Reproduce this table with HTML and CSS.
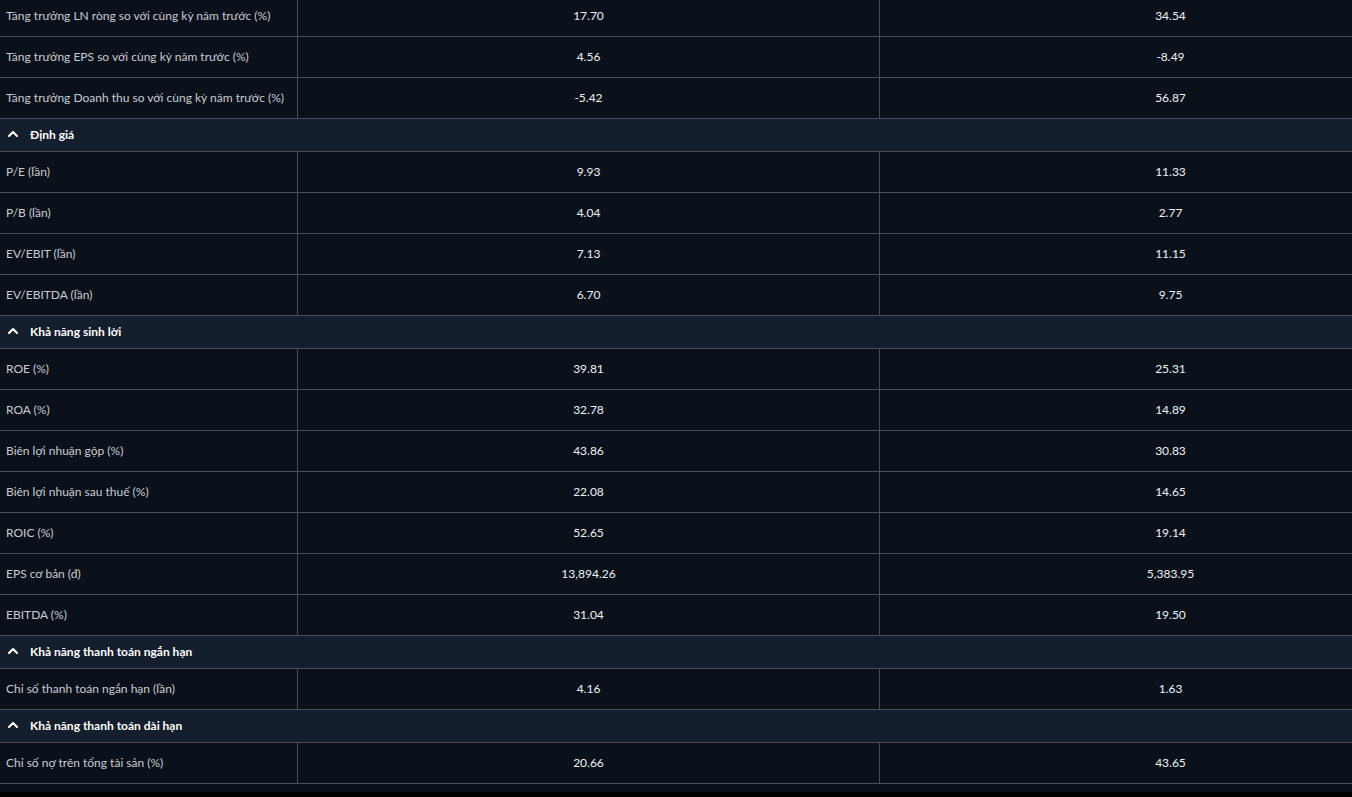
FILE: index.html
```html
<!DOCTYPE html>
<html lang="vi">
<head>
<meta charset="utf-8">
<title>Chỉ số tài chính</title>
<link rel="stylesheet" href="styles.css">
</head>
<body>
<div class="viewport">
  <div class="table">
    <div class="row"><div class="cell label">Tăng trưởng LN ròng so với cùng kỳ năm trước (%)</div><div class="cell val">17.70</div><div class="cell val last">34.54</div></div>
    <div class="row"><div class="cell label">Tăng trưởng EPS so với cùng kỳ năm trước (%)</div><div class="cell val">4.56</div><div class="cell val last">-8.49</div></div>
    <div class="row"><div class="cell label">Tăng trưởng Doanh thu so với cùng kỳ năm trước (%)</div><div class="cell val">-5.42</div><div class="cell val last">56.87</div></div>

    <div class="section"><svg class="chev" width="10" height="6" viewBox="0 0 10 6"><path d="M1 5 L5 1 L9 5" fill="none" stroke="#fff" stroke-width="2" stroke-linecap="round" stroke-linejoin="round"/></svg><span>Định giá</span></div>
    <div class="row"><div class="cell label">P/E (lần)</div><div class="cell val">9.93</div><div class="cell val last">11.33</div></div>
    <div class="row"><div class="cell label">P/B (lần)</div><div class="cell val">4.04</div><div class="cell val last">2.77</div></div>
    <div class="row"><div class="cell label">EV/EBIT (lần)</div><div class="cell val">7.13</div><div class="cell val last">11.15</div></div>
    <div class="row"><div class="cell label">EV/EBITDA (lần)</div><div class="cell val">6.70</div><div class="cell val last">9.75</div></div>

    <div class="section"><svg class="chev" width="10" height="6" viewBox="0 0 10 6"><path d="M1 5 L5 1 L9 5" fill="none" stroke="#fff" stroke-width="2" stroke-linecap="round" stroke-linejoin="round"/></svg><span>Khả năng sinh lời</span></div>
    <div class="row"><div class="cell label">ROE (%)</div><div class="cell val">39.81</div><div class="cell val last">25.31</div></div>
    <div class="row"><div class="cell label">ROA (%)</div><div class="cell val">32.78</div><div class="cell val last">14.89</div></div>
    <div class="row"><div class="cell label">Biên lợi nhuận gộp (%)</div><div class="cell val">43.86</div><div class="cell val last">30.83</div></div>
    <div class="row"><div class="cell label">Biên lợi nhuận sau thuế (%)</div><div class="cell val">22.08</div><div class="cell val last">14.65</div></div>
    <div class="row"><div class="cell label">ROIC (%)</div><div class="cell val">52.65</div><div class="cell val last">19.14</div></div>
    <div class="row"><div class="cell label">EPS cơ bản (đ)</div><div class="cell val">13,894.26</div><div class="cell val last">5,383.95</div></div>
    <div class="row"><div class="cell label">EBITDA (%)</div><div class="cell val">31.04</div><div class="cell val last">19.50</div></div>

    <div class="section"><svg class="chev" width="10" height="6" viewBox="0 0 10 6"><path d="M1 5 L5 1 L9 5" fill="none" stroke="#fff" stroke-width="2" stroke-linecap="round" stroke-linejoin="round"/></svg><span>Khả năng thanh toán ngắn hạn</span></div>
    <div class="row"><div class="cell label">Chỉ số thanh toán ngắn hạn (lần)</div><div class="cell val">4.16</div><div class="cell val last">1.63</div></div>

    <div class="section"><svg class="chev" width="10" height="6" viewBox="0 0 10 6"><path d="M1 5 L5 1 L9 5" fill="none" stroke="#fff" stroke-width="2" stroke-linecap="round" stroke-linejoin="round"/></svg><span>Khả năng thanh toán dài hạn</span></div>
    <div class="row"><div class="cell label">Chỉ số nợ trên tổng tài sản (%)</div><div class="cell val">20.66</div><div class="cell val last">43.65</div></div>
  </div>
</div>
</body>
</html>
```

FILE: styles.css
```css
html, body {
  margin: 0;
  padding: 0;
  background: #000;
  height: 100%;
}
body {
  font-family: Lato, "Noto Sans", sans-serif;
  font-size: 12px;
  overflow: hidden;
}
.viewport {
  width: 1352px;
  overflow: hidden;
  background: #0b111b;
  padding-bottom: 8px;
}
.table {
  width: 1461px;
  margin-top: -4px;
}
.row {
  display: grid;
  grid-template-columns: 298px 582px 581px;
  border-bottom: 1px solid #4a4f57;
}
.cell {
  box-sizing: border-box;
  height: 40px;
  padding-bottom: 2px;
  display: flex;
  align-items: center;
  border-right: 1px solid #4a4f57;
}
.cell.last {
  border-right: none;
}
.label {
  padding-left: 6px;
  color: #c8ccd3;
}
.val {
  justify-content: center;
  color: #eef1f5;
}
.section {
  box-sizing: border-box;
  height: 32px;
  padding-bottom: 2px;
  display: flex;
  align-items: center;
  background: #141e2d;
  border-bottom: 1px solid #4a4f57;
  color: #ffffff;
  font-weight: 700;
  padding-left: 8px;
}
.section {
  height: 33px;
}
.chev {
  margin-right: 12px;
  margin-top: 0;
}
```
